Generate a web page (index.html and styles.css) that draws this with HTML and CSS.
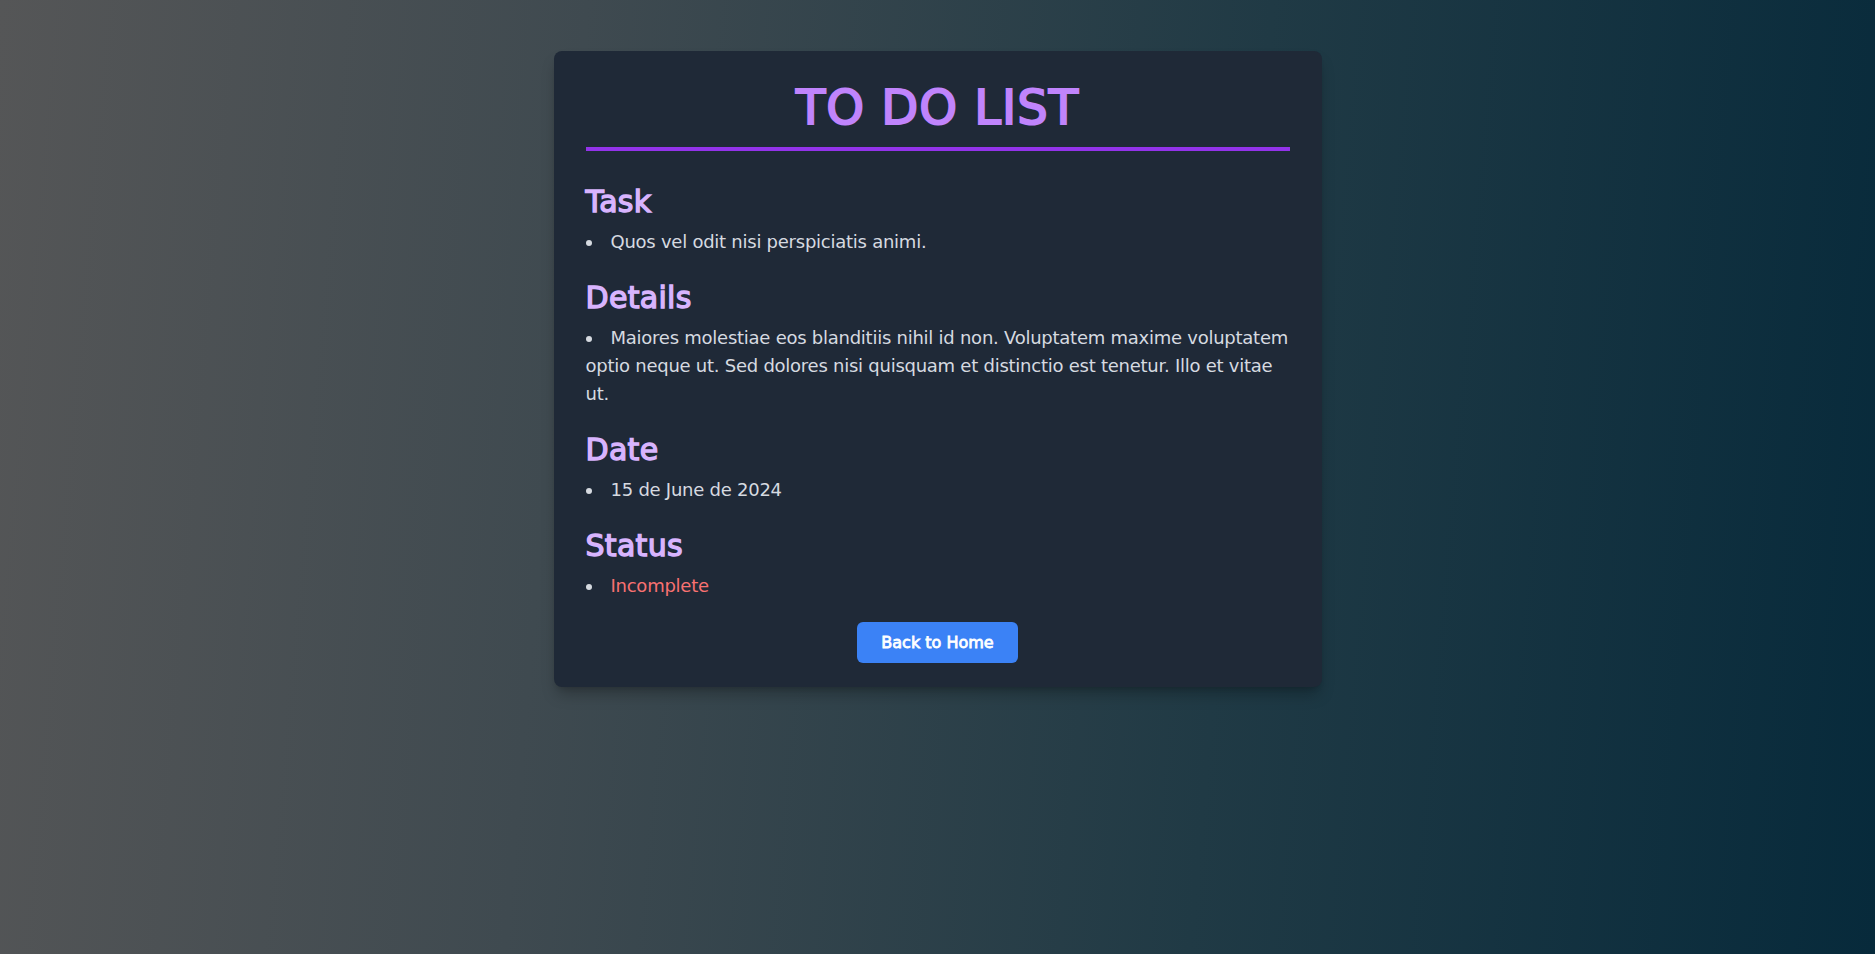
FILE: index.html
```html
<!DOCTYPE html>
<html lang="en">
<head>
<meta charset="utf-8">
<title>To Do List</title>
<link rel="stylesheet" href="styles.css">
</head>
<body>
  <main class="page">
    <article class="card">
      <header class="card-header">
        <h1 class="title">TO DO LIST</h1>
      </header>
      <section class="section">
        <h2 class="section-title">Task</h2>
        <ul class="section-list">
          <li>Quos vel odit nisi perspiciatis animi.</li>
        </ul>
      </section>
      <section class="section">
        <h2 class="section-title">Details</h2>
        <ul class="section-list">
          <li>Maiores molestiae eos blanditiis nihil id non. Voluptatem maxime voluptatem optio neque ut. Sed dolores nisi quisquam et distinctio est tenetur. Illo et vitae ut.</li>
        </ul>
      </section>
      <section class="section">
        <h2 class="section-title">Date</h2>
        <ul class="section-list">
          <li>15 de June de 2024</li>
        </ul>
      </section>
      <section class="section section-last">
        <h2 class="section-title">Status</h2>
        <ul class="section-list">
          <li class="status-incomplete">Incomplete</li>
        </ul>
      </section>
      <div class="actions">
        <a class="btn" href="#">Back to Home</a>
      </div>
    </article>
  </main>
</body>
</html>
```
FILE: styles.css
```css
* {
  box-sizing: border-box;
}

html, body {
  margin: 0;
  padding: 0;
  height: 100%;
}

body {
  font-family: "DejaVu Sans", Verdana, sans-serif;
  background: linear-gradient(95deg, #555657 0%, #3f4a50 30%, #203a45 65%, #072a3b 100%);
  color: #d1d5db;
}

.page {
  min-height: 100%;
  padding-top: 51px;
  display: flex;
  justify-content: center;
  align-items: flex-start;
}

.card {
  width: 768px;
  background: #1f2937;
  border-radius: 8px;
  padding: 32px 32px 24px;
  box-shadow: 0 10px 15px -3px rgba(0, 0, 0, 0.25), 0 4px 6px -4px rgba(0, 0, 0, 0.2);
}

.card-header {
  border-bottom: 4px solid #9333ea;
  padding-bottom: 16px;
  margin-bottom: 33px;
}

.title {
  margin: 0;
  text-align: center;
  font-size: 48px;
  line-height: 48px;
  font-weight: 400;
  letter-spacing: 1px;
  -webkit-text-stroke: 2px #c084fc;
  color: #c084fc;
}

.section {
  margin-bottom: 24px;
}

.section-last {
  margin-bottom: 22px;
}

.section-title {
  margin: 0 0 8px;
  font-size: 30px;
  line-height: 36px;
  font-weight: 400;
  letter-spacing: 0.3px;
  -webkit-text-stroke: 1.4px #d8b4fe;
  color: #d8b4fe;
}

.section-list {
  margin: 0;
  padding: 0;
  list-style: disc inside;
  font-size: 18px;
  line-height: 28px;
  letter-spacing: -0.25px;
  color: #d6dae0;
}

.status-incomplete {
  color: #f87171;
}

.status-incomplete::marker {
  color: #d6dae0;
}

.actions {
  display: flex;
  justify-content: center;
}

.btn {
  display: inline-block;
  background: #3b82f6;
  color: #ffffff;
  font-weight: 400;
  -webkit-text-stroke: 0.8px #ffffff;
  font-size: 16px;
  line-height: 24px;
  padding: 9px 24px 8px;
  border-radius: 6px;
  text-decoration: none;
}
```
